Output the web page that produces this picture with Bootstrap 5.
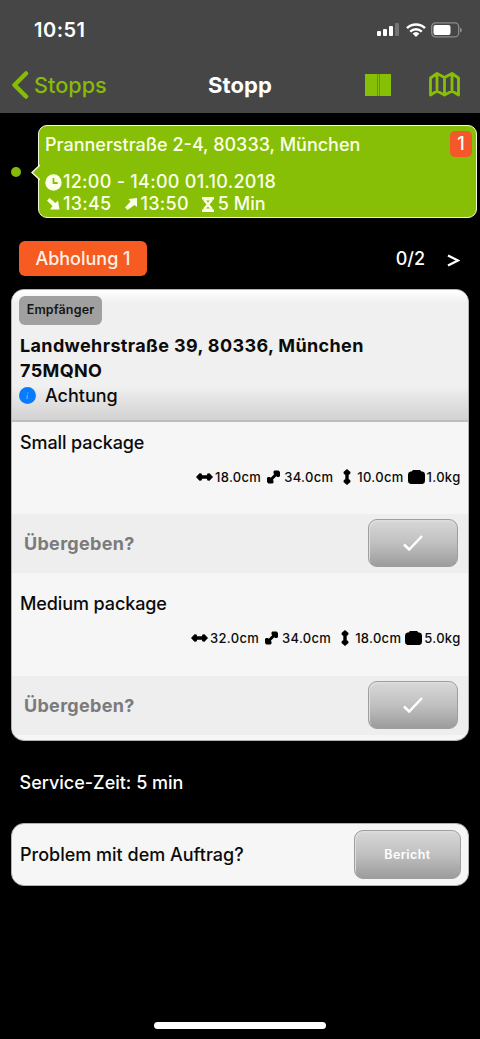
<!DOCTYPE html>
<html lang="de">
<head>
<meta charset="utf-8">
<meta name="viewport" content="width=device-width, initial-scale=1">
<title>Stopp</title>
<link href="https://cdn.jsdelivr.net/npm/bootstrap@5.3.0/dist/css/bootstrap.min.css" rel="stylesheet">
<style>
  body { font-family: Inter, "Liberation Sans", sans-serif; font-size: 18px; font-weight: 500; line-height: 26px; background: #000; color: #fff; }
  svg { display: block; flex: none; }
  .screen { width: 480px; height: 1039px; overflow: hidden; }
  .topbar { background: #464646; height: 112.5px; }
  .statusbar { height: 59px; padding: 0 18px 0 34px; }
  .clock { font-size: 20px; font-weight: 600; letter-spacing: .5px; }
  .titlebar { height: 51px; padding: 0 20px 0 11px; color: #86bc06; }
  .backlink { color: #86bc06; font-size: 21.7px; font-weight: 500; width: 197px; }
  .title { color: #fff; font-size: 22px; font-weight: 700; letter-spacing: .1px; }
  .stoprow { padding: 12.5px 3px 0 11px; }
  .dot { width: 10px; height: 10px; background: #86bc06; }
  .callout { width: 439px; height: 93px; background: #86bf05; border: 1.5px solid #f4fbdc; border-radius: 9px; padding: 6px 4px 0 6px; color: #fbffe9; }
  .callout-tip { left: -8px; top: 38px; }
  .times { letter-spacing: .27px; }
  .count { width: 22px; height: 25.5px; border-radius: 5px; background: #f4572a; color: #fff; margin-top: -1px; }
  .taskrow { margin: 22.5px 20px 0 19px; height: 36px; }
  .task { width: 128px; height: 35px; border-radius: 6px; background: #f65b22; color: #fff1e6; }
  .panel { margin: 0 11px; border: 1.5px solid #b2b2b2; border-radius: 13px; background: #f6f6f6; color: #0b0b0b; overflow: hidden; }
  .recipient { height: 132px; padding: 6px 8px 0 7px; border-bottom: 2px solid #bdbdbd; background: linear-gradient(#fff 0, #f0f0f0 13px, #f0f0f0 96px, #e4e4e4 109px, #d2d2d2 100%); }
  .role { width: 83px; height: 29px; border-radius: 6px; background: #a0a0a0; color: #161616; font-size: 12.5px; font-weight: 600; letter-spacing: .15px; }
  .address { font-weight: 700; line-height: 25.3px; letter-spacing: .36px; padding-left: 1px; }
  .parcel { height: 92px; padding: 8px 8px 0; letter-spacing: -.1px; }
  .dims { font-size: 13px; line-height: 20px; letter-spacing: .3px; }
  .dims span:last-child { margin-right: -.5px; }
  .handover { height: 59px; padding: 0 10.5px 0 12px; background: #eee; color: #7b7b7b; font-weight: 700; letter-spacing: .3px; }
  .handover span { padding-top: 2px; }
  .graybtn { border: 1.5px solid #9e9e9e; border-radius: 9px; height: 48.5px; color: #fff; background: linear-gradient(#d8d8d8, #c0c0c0 50%, #9c9c9c); box-shadow: inset 1px 1.5px 0 #dedede; }
  .confirm { width: 90px; }
  .report { width: 107px; font-size: 12.5px; font-weight: 600; letter-spacing: .45px; }
  .homebar { width: 172px; height: 6.5px; background: #fff; margin-bottom: 10.5px; }
</style>
</head>
<body>
<svg class="d-none" aria-hidden="true">
  <symbol id="wide" viewBox="0 0 17 10"><path d="M0 5 3.500 1.300 5.500 1.500 6.200 3.300h4.600L11.500 1.500l2-.2L17 5l-3.500 3.700-2-.2-.7-1.800H6.200l-.7 1.800-2 .2z"/></symbol>
  <symbol id="deep" viewBox="0 0 14 14"><path d="M7 1 8 0h4.500L14 1.500V6l-1 1h-2L10 6.300 6.300 10 7 11v2l-1 1H1.500L0 12.500V8l1-1h2l1 .7L7.700 4 7 3z"/></symbol>
  <symbol id="high" viewBox="0 0 8 16"><path d="m4 0 3.500 3-.3 2L5.700 5.700v4.600l1.500.7.3 2L4 16 .5 13l.3-2 1.500-.7V5.700L.8 5 .5 3z"/></symbol>
  <symbol id="weight" viewBox="0 0 17 14"><path d="M3.500 1.500 5 0h7l1.500 1.500h1Q17 2 17 4.500V11q0 2.500-2.500 3h-12Q0 13.500 0 11V4.500Q0 2 2.500 1.500z"/></symbol>
  <symbol id="tick" viewBox="0 0 20 16"><path d="m1 9.500 5.200 5L19 1" fill="none" stroke="#fff" stroke-width="2.500"/></symbol>
</svg>
<div class="screen d-flex flex-column">
  <header class="topbar">
    <div class="statusbar d-flex align-items-center">
      <span class="clock me-auto">10:51</span>
      <svg width="23" height="15" viewBox="0 0 23 15" fill="#fff"><rect x="0" y="9" width="4" height="5" rx="1"/><rect x="6" y="7" width="4" height="7" rx="1"/><rect x="12" y="4" width="4" height="10" rx="1"/><rect x="18" y="1" width="4" height="13" rx="1" fill="#747474"/></svg>
      <svg style="margin-left:5px" width="22" height="16" viewBox="0 0 22 16" fill="none" stroke="#fff" stroke-width="2.500"><path d="M2 6.200a13 13 0 0 1 18 0M5.200 9.600a8.500 8.500 0 0 1 11.600 0"/><path d="m11 15-3.400-3.400a5 5 0 0 1 6.800 0z" fill="#fff" stroke="none"/></svg>
      <svg style="margin-left:3px" width="32" height="16" viewBox="0 0 32 16"><rect x="1.700" y=".9" width="27" height="14" rx="4" fill="none" stroke="#8b8b8b" stroke-width="1.300"/><rect x="3.500" y="2.900" width="17" height="10" rx="2" fill="#fff"/><path d="M30 5.500v5q2-1 2-2.500t-2-2.500" fill="#8b8b8b"/></svg>
    </div>
    <nav class="titlebar d-flex align-items-center">
      <a class="backlink d-flex align-items-center gap-1 text-decoration-none" href="#">
        <svg width="19" height="28" viewBox="0 0 19 28"><path d="M15 2.500 3.500 14 15 25.500" fill="none" stroke="#86bc06" stroke-width="4.500" stroke-linecap="round" stroke-linejoin="round"/></svg>Stopps</a>
      <span class="title me-auto">Stopp</span>
      <svg width="26" height="22" viewBox="0 0 26 22"><path fill="#86bf05" d="M0 0h26v22H0z"/><path d="M12.500 0v22M14.500 0v22" stroke="#5f8810" stroke-width=".8"/></svg>
      <svg style="margin-left:38px" width="31" height="25" viewBox="0 0 31 25" fill="none" stroke="#86bf05" stroke-width="2.800" stroke-linejoin="round"><path d="M1.500 6 8 1.500l7.500 4 7.500-4L29.500 6v17L23 19l-7.500 4L8 19l-6.500 4zM8 2v17M15.500 6v17M23 2v17"/></svg>
    </nav>
  </header>

  <section class="stoprow d-flex align-items-center justify-content-between">
    <span class="dot rounded-circle"></span>
    <div class="callout position-relative">
      <svg class="callout-tip position-absolute" width="9" height="17" viewBox="0 0 9 17"><path d="M9 1 1 8.500 9 16" fill="#86bf05" stroke="#f4fbdc" stroke-width="1.500"/></svg>
      <div class="d-flex justify-content-between">
        <span>Prannerstraße 2-4, 80333, München</span>
        <span class="count d-flex align-items-center justify-content-center">1</span>
      </div>
      <div class="times d-flex align-items-center" style="margin-top:11px;height:26px">
        <svg width="17" height="17" viewBox="0 0 17 17"><circle cx="8.500" cy="8.500" r="8.200" fill="#fbffe9"/><path d="M8.500 4v5h4.200" fill="none" stroke="#86bf05" stroke-width="1.800"/></svg>
        <span style="margin-left:1px">12:00 - 14:00 01.10.2018</span>
      </div>
      <div class="times d-flex align-items-center" style="margin-top:-4px;height:26px">
        <svg style="margin-left:2px" width="13" height="12" viewBox="0 0 13 12" fill="#fbffe9"><path d="M0 2.500 2.500 0 8.500 5 11 2.500l1.500 9H3L5.500 8z"/></svg>
        <span style="margin-left:3px">13:45</span>
        <svg style="margin-left:13px" width="12" height="12" viewBox="0 0 12 12" fill="#fbffe9"><path d="M12 0v9L9.500 7l-7 5L0 9.500l5.500-6L3.500 1z"/></svg>
        <span style="margin-left:4px">13:50</span>
        <svg style="margin-left:13px" width="12" height="15" viewBox="0 0 12 15"><path d="M1.500 1v3L4.500 7.500 1.500 11v3h9v-3L7.500 7.500 10.500 4V1z" fill="#fbffe9"/><path d="M0 1.200h12M0 13.800h12" stroke="#fbffe9" stroke-width="2.400"/><path d="M4 3.500h4L6 5.500zM6 9.500l2 2H4z" fill="#86bf05"/></svg>
        <span style="margin-left:4px;letter-spacing:0">5 Min</span>
      </div>
    </div>
  </section>

  <section class="taskrow d-flex align-items-center">
    <span class="task d-flex align-items-center justify-content-center me-auto">Abholung 1</span>
    <span>0/2</span>
    <svg style="margin-left:22px;margin-top:3px" width="13" height="13" viewBox="0 0 13 13"><path d="M1 1.500 11 6.500 1 11.500" fill="none" stroke="#fff" stroke-width="2.400"/></svg>
  </section>

  <main class="panel" style="margin-top:12px;height:452px">
    <div class="recipient">
      <span class="role d-flex align-items-center justify-content-center">Empfänger</span>
      <div class="address" style="margin-top:8px">Landwehrstraße 39, 80336, München<br>75MQNO</div>
      <div class="d-flex align-items-center" style="height:25px">
        <svg width="17" height="17" viewBox="0 0 17 17"><circle cx="8.500" cy="8.500" r="8.500" fill="#087cff"/><path d="m9 5.500-.3 1.200M8.500 8l-.7 4" stroke="#75b6ff" stroke-width="1.100"/></svg>
        <span style="margin-left:9px">Achtung</span>
      </div>
    </div>
    <div class="parcel">
      <div>Small package</div>
      <div class="dims d-flex align-items-center justify-content-end" style="margin-top:11px">
        <svg width="17" height="10"><use href="#wide"/></svg><span style="margin-left:2px">18.0cm</span>
        <svg style="margin-left:6px" width="13" height="14"><use href="#deep"/></svg><span style="margin-left:4px">34.0cm</span>
        <svg style="margin-left:10px" width="8" height="16"><use href="#high"/></svg><span style="margin-left:6px">10.0cm</span>
        <svg style="margin-left:4px" width="17" height="14"><use href="#weight"/></svg><span style="margin-left:2px">1.0kg</span>
      </div>
    </div>
    <div class="handover d-flex align-items-center justify-content-between">
      <span>Übergeben?</span>
      <button class="graybtn confirm d-flex align-items-center justify-content-center p-0" aria-label="Ja"><svg width="20" height="16"><use href="#tick"/></svg></button>
    </div>
    <div class="parcel" style="height:103px;padding-top:18.500px">
      <div>Medium package</div>
      <div class="dims d-flex align-items-center justify-content-end" style="margin-top:10.500px">
        <svg width="17" height="10"><use href="#wide"/></svg><span style="margin-left:2px">32.0cm</span>
        <svg style="margin-left:6px" width="13" height="14"><use href="#deep"/></svg><span style="margin-left:4px">34.0cm</span>
        <svg style="margin-left:10px" width="8" height="16"><use href="#high"/></svg><span style="margin-left:6px">18.0cm</span>
        <svg style="margin-left:4px" width="17" height="14"><use href="#weight"/></svg><span style="margin-left:2px">5.0kg</span>
      </div>
    </div>
    <div class="handover d-flex align-items-center justify-content-between">
      <span>Übergeben?</span>
      <button class="graybtn confirm d-flex align-items-center justify-content-center p-0" aria-label="Ja"><svg width="20" height="16"><use href="#tick"/></svg></button>
    </div>
  </main>

  <div style="margin:29px 20px 0 19.500px">Service-Zeit: 5 min</div>

  <section class="panel d-flex align-items-center justify-content-between" style="margin-top:27.500px;height:63px;padding:0 7px 0 8px">
    <span style="padding-top:1px">Problem mit dem Auftrag?</span>
    <button class="graybtn report p-0">Bericht</button>
  </section>

  <div class="homebar rounded-pill mx-auto mt-auto"></div>
</div>
<script src="https://cdn.jsdelivr.net/npm/bootstrap@5.3.0/dist/js/bootstrap.bundle.min.js"></script>
</body>
</html>
